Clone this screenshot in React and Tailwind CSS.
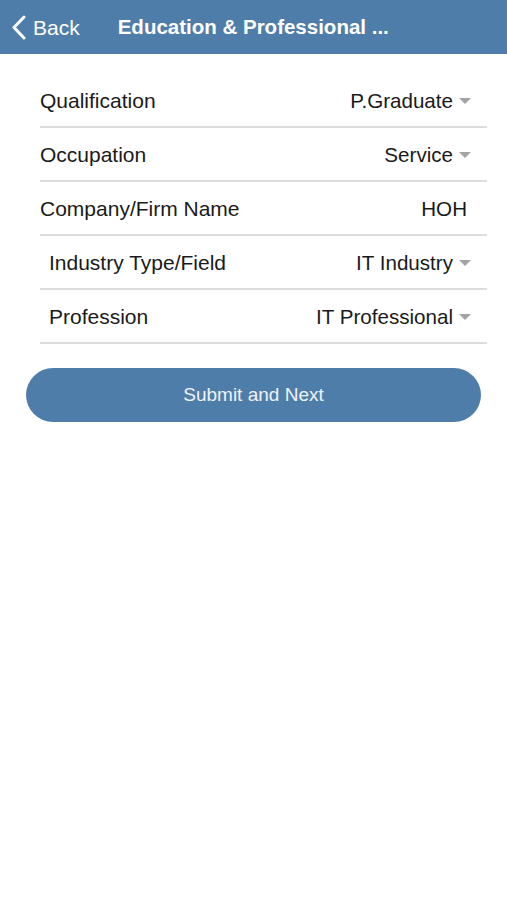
import React from "react";

const rows = [
  { label: "Qualification", value: "P.Graduate", arrow: true, indent: false },
  { label: "Occupation", value: "Service", arrow: true, indent: false },
  { label: "Company/Firm Name", value: "HOH", arrow: false, indent: false },
  { label: "Industry Type/Field", value: "IT Industry", arrow: true, indent: true },
  { label: "Profession", value: "IT Professional", arrow: true, indent: true },
];

function Arrow() {
  return (
    <svg width="12" height="6" viewBox="0 0 12 6" className="ml-[6px]">
      <polygon points="0,0 12,0 6,6" fill="#a3a3a3" />
    </svg>
  );
}

export default function App() {
  return (
    <div
      className="w-[507px] h-[900px] bg-white"
      style={{ fontFamily: '"Liberation Sans", Arial, sans-serif' }}
    >
      <div className="h-[54px] bg-[#4f7daa] flex items-center text-white">
        <div className="flex items-center pl-[11px]">
          <svg width="15" height="25" viewBox="0 0 15 25">
            <polyline
              points="13,2 3,12.5 13,23"
              fill="none"
              stroke="white"
              strokeWidth="3"
              strokeLinecap="round"
              strokeLinejoin="round"
            />
          </svg>
          <span className="text-[21px] ml-[7px] leading-none">Back</span>
        </div>
        <span className="text-[20.5px] font-bold ml-[38px] leading-none">
          Education &amp; Professional ...
        </span>
      </div>
      <div className="pt-[20px]">
        <div className="ml-[40px] mr-[20px]">
          {rows.map((r) => (
            <div
              key={r.label}
              className="h-[54px] pt-[2px] flex items-center justify-between border-b-2 border-[#dddddd] text-[21px] text-[#1a1a1a]"
            >
              <span className={r.indent ? "pl-[9px]" : ""}>{r.label}</span>
              <span className={"flex items-center text-[20.6px] " + (r.arrow ? "pr-[16px]" : "pr-[20px]")}>
                {r.value}
                {r.arrow && <Arrow />}
              </span>
            </div>
          ))}
        </div>
        <div className="px-[26px] mt-[24px]">
          <button className="w-full h-[54px] rounded-full bg-[#4f7daa] text-[#eef3f8] text-[19px]">
            Submit and Next
          </button>
        </div>
      </div>
    </div>
  );
}
